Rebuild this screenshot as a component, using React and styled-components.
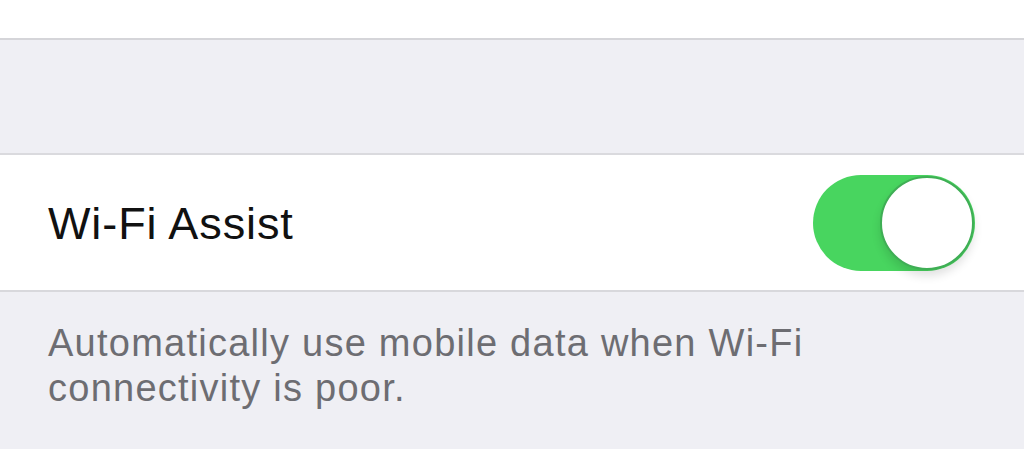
import React, { useState } from "react";
import styled, { createGlobalStyle } from "styled-components";

const Global = createGlobalStyle`
    html, body {
        margin: 0;
        padding: 0;
        background: #efeff4;
        font-family: "Liberation Sans", Arial, sans-serif;
    }
`;

const Page = styled.div`
    width: 1024px;
    height: 449px;
    overflow: hidden;
    background: #efeff4;
`;

const TopCell = styled.div`
    height: 38px;
    background: #fff;
    border-bottom: 2px solid #d5d5d9;
`;

const Gap = styled.div`
    height: ${p => p.h}px;
`;

const Cell = styled.div`
    height: 135px;
    background: #fff;
    border-top: 2px solid #dadade;
    border-bottom: 2px solid #d8d8dc;
    display: flex;
    align-items: center;
    justify-content: space-between;
    padding: 0 49px 0 48px;
`;

const Label = styled.span`
    font-size: 45px;
    color: #111;
    letter-spacing: 0.9px;
    padding-top: 3px;
`;

const Track = styled.button`
    width: 162px;
    height: 96px;
    border-radius: 48px;
    border: none;
    padding: 1px;
    background: ${p => (p.on ? "#48d55f" : "#e5e5ea")};
    display: flex;
    justify-content: ${p => (p.on ? "flex-end" : "flex-start")};
    align-items: center;
    cursor: pointer;
`;

const Knob = styled.span`
    width: 90px;
    height: 90px;
    border-radius: 50%;
    background: #fff;
    border: 2px solid #3fae55;
    box-shadow: 0 6px 10px rgba(0, 0, 0, 0.12);
`;

const Footnote = styled.p`
    margin: 0;
    padding: 29px 48px 0;
    font-size: 38px;
    line-height: 45px;
    letter-spacing: 1.25px;
    color: #6d6d72;
`;

export default function App() {
    const [on, setOn] = useState(true);
    return (
        <Page>
            <Global />
            <TopCell />
            <Gap h={113} />
            <Cell>
                <Label>Wi-Fi Assist</Label>
                <Track on={on} onClick={() => setOn(!on)}>
                    <Knob />
                </Track>
            </Cell>
            <Footnote>
                Automatically use mobile data when Wi-Fi
                <br />
                connectivity is poor.
            </Footnote>
        </Page>
    );
}
